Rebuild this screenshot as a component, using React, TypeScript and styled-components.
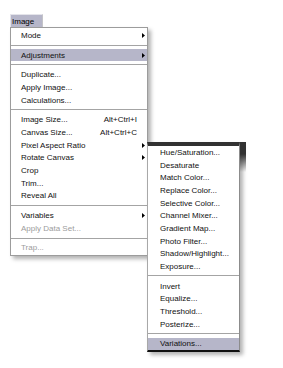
import React from 'react'
import styled, { createGlobalStyle } from 'styled-components'

type Entry =
  | { kind: 'sep' }
  | { kind: 'item'; label: string; shortcut?: string; sub?: boolean; active?: boolean; disabled?: boolean }

const mainItems: Entry[] = [
  { kind: 'item', label: 'Mode', sub: true },
  { kind: 'sep' },
  { kind: 'item', label: 'Adjustments', sub: true, active: true },
  { kind: 'sep' },
  { kind: 'item', label: 'Duplicate...' },
  { kind: 'item', label: 'Apply Image...' },
  { kind: 'item', label: 'Calculations...' },
  { kind: 'sep' },
  { kind: 'item', label: 'Image Size...', shortcut: 'Alt+Ctrl+I' },
  { kind: 'item', label: 'Canvas Size...', shortcut: 'Alt+Ctrl+C' },
  { kind: 'item', label: 'Pixel Aspect Ratio', sub: true },
  { kind: 'item', label: 'Rotate Canvas', sub: true },
  { kind: 'item', label: 'Crop' },
  { kind: 'item', label: 'Trim...' },
  { kind: 'item', label: 'Reveal All' },
  { kind: 'sep' },
  { kind: 'item', label: 'Variables', sub: true },
  { kind: 'item', label: 'Apply Data Set...', disabled: true },
  { kind: 'sep' },
  { kind: 'item', label: 'Trap...', disabled: true },
]

const subItems: Entry[] = [
  { kind: 'item', label: 'Hue/Saturation...' },
  { kind: 'item', label: 'Desaturate' },
  { kind: 'item', label: 'Match Color...' },
  { kind: 'item', label: 'Replace Color...' },
  { kind: 'item', label: 'Selective Color...' },
  { kind: 'item', label: 'Channel Mixer...' },
  { kind: 'item', label: 'Gradient Map...' },
  { kind: 'item', label: 'Photo Filter...' },
  { kind: 'item', label: 'Shadow/Highlight...' },
  { kind: 'item', label: 'Exposure...' },
  { kind: 'sep' },
  { kind: 'item', label: 'Invert' },
  { kind: 'item', label: 'Equalize...' },
  { kind: 'item', label: 'Threshold...' },
  { kind: 'item', label: 'Posterize...' },
  { kind: 'sep' },
  { kind: 'item', label: 'Variations...', active: true },
]

const Arrow = () => (
  <svg width="3" height="5" viewBox="0 0 3 5">
    <polygon points="0,0 3,2.5 0,5" fill="#000" />
  </svg>
)

const App = () => {
  const renderList = (list: Entry[], pad: number, lineAt: number) =>
    list.map((e, i) =>
      e.kind === 'sep' ? (
        <Separator key={i} $top={lineAt} />
      ) : (
        <Row key={i} $active={e.active} $disabled={e.disabled} $pad={pad}>
          <Label>{e.label}</Label>
          {e.shortcut && <Shortcut>{e.shortcut}</Shortcut>}
          <ArrowCell>{e.sub && <Arrow />}</ArrowCell>
        </Row>
      )
    )

  return (
    <>
      <GlobalStyle />
      <Page>
        <MenuWrap>
          <Tab>Image</Tab>
          <Menu>{renderList(mainItems, 10, 3)}</Menu>
          <Flyout>{renderList(subItems, 12, 2)}</Flyout>
        </MenuWrap>
      </Page>
    </>
  )
}

const GlobalStyle = createGlobalStyle`
  html, body {
    margin: 0;
    background: #ffffff;
  }
  body {
    font-family: "Liberation Sans", Arial, sans-serif;
    font-size: 8px;
    color: #000;
  }
`

export const Page = styled.div`
  box-sizing: border-box;
  min-height: 368px;
  padding: 14px 0 0 10px;
`

export const MenuWrap = styled.div`
  position: relative;
  width: 138px;
`

export const Tab = styled.div`
  display: inline-block;
  width: 30px;
  height: 12px;
  line-height: 13px;
  padding-left: 1px;
  background: #b6b6c9;
  border-top: 1px solid #e4e4ea;
  border-left: 1px solid #e4e4ea;
  border-right: 1px solid #c4c4c8;
  color: #000;
  vertical-align: bottom;
`

export const Menu = styled.div`
  background: #fff;
  border: 1px solid #9c9c9c;
  padding: 1px 0;
  box-shadow: 3px 3px 4px rgba(0, 0, 0, 0.3);
`

export const Flyout = styled.div`
  position: absolute;
  left: 137px;
  top: 128px;
  width: 91px;
  background: #fff;
  border-left: 1px solid #a8a8a8;
  border-right: 1px solid #8c8c8c;
  border-top: 4px solid #323232;
  border-bottom: 2px solid #111;
  box-shadow: 3px 3px 4px rgba(0, 0, 0, 0.3);
  &::after {
    content: '';
    position: absolute;
    top: -4px;
    right: -7px;
    width: 6px;
    height: 30px;
    background: linear-gradient(#323232 40%, rgba(90, 90, 90, 0));
  }
`

export const Row = styled.div<{ $active?: boolean; $disabled?: boolean; $pad: number }>`
  display: flex;
  align-items: center;
  height: 12.7px;
  padding: 0 2px 0 ${p => p.$pad}px;
  background: ${p => (p.$active ? '#b6b6c9' : 'transparent')};
  color: ${p => (p.$disabled ? '#9c9c9c' : '#111')};
  white-space: nowrap;
`

export const Label = styled.span`
  flex: 1;
`

export const Shortcut = styled.span`
  text-align: right;
`

export const ArrowCell = styled.span`
  width: 8px;
  display: flex;
  justify-content: flex-end;
  svg {
    display: block;
  }
`

export const Separator = styled.div<{ $top: number }>`
  height: 7px;
  box-sizing: border-box;
  padding-top: ${p => p.$top}px;
  &::before {
    content: '';
    display: block;
    height: 1px;
    background: #a4a4a4;
  }
`

export default App
